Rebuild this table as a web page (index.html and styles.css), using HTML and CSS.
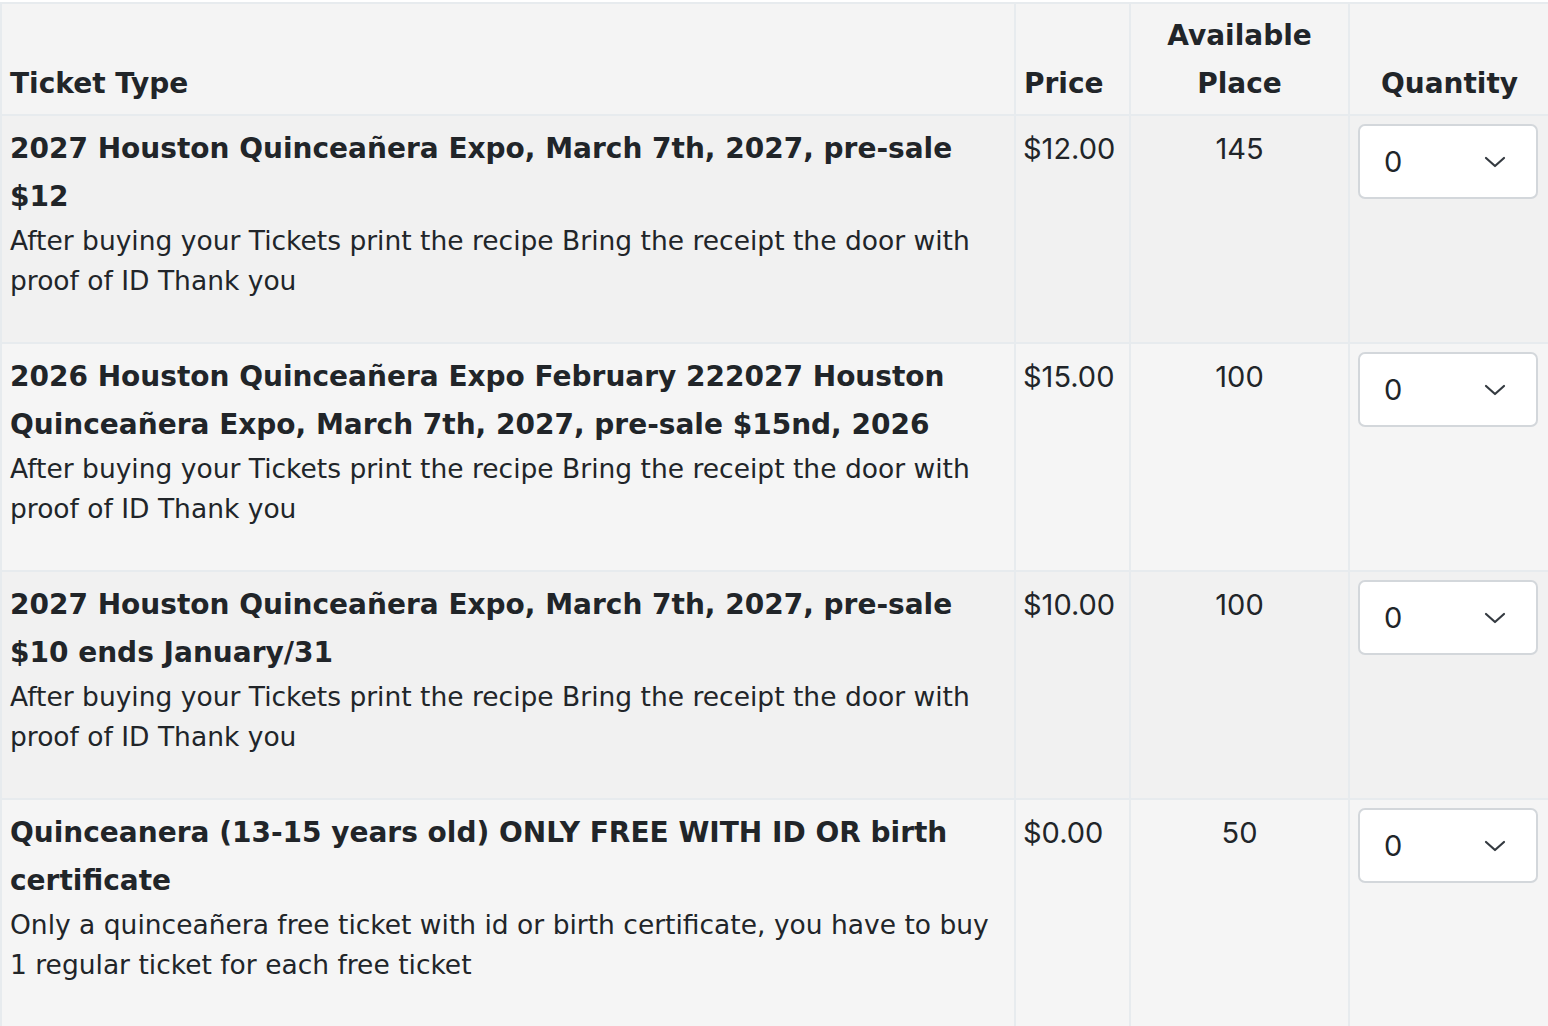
FILE: index.html
```html
<!DOCTYPE html>
<html lang="en">
<head>
<meta charset="utf-8">
<title>Tickets</title>
<link rel="stylesheet" href="styles.css">
</head>
<body>
<table class="tickets">
  <thead>
    <tr>
      <th class="col-type">Ticket Type</th>
      <th class="col-price">Price</th>
      <th class="col-avail">Available Place</th>
      <th class="col-qty">Quantity</th>
    </tr>
  </thead>
  <tbody>
    <tr class="odd">
      <td class="type"><div class="title">2027 Houston Quinceañera Expo, March 7th, 2027, pre-sale $12</div><p class="desc">After buying your Tickets print the recipe Bring the receipt the door with proof of ID Thank you</p></td>
      <td class="price">$12.00</td>
      <td class="avail">145</td>
      <td class="qty"><div class="select"><span>0</span><svg width="22" height="12" viewBox="0 0 22 12"><path d="M2 2 L11 10 L20 2" fill="none" stroke="#343a40" stroke-width="2.2" stroke-linecap="round" stroke-linejoin="round"/></svg></div></td>
    </tr>
    <tr class="even">
      <td class="type"><div class="title">2026 Houston Quinceañera Expo February 222027 Houston Quinceañera Expo, March 7th, 2027, pre-sale $15nd, 2026</div><p class="desc">After buying your Tickets print the recipe Bring the receipt the door with proof of ID Thank you</p></td>
      <td class="price">$15.00</td>
      <td class="avail">100</td>
      <td class="qty"><div class="select"><span>0</span><svg width="22" height="12" viewBox="0 0 22 12"><path d="M2 2 L11 10 L20 2" fill="none" stroke="#343a40" stroke-width="2.2" stroke-linecap="round" stroke-linejoin="round"/></svg></div></td>
    </tr>
    <tr class="odd">
      <td class="type"><div class="title">2027 Houston Quinceañera Expo, March 7th, 2027, pre-sale $10 ends January/31</div><p class="desc">After buying your Tickets print the recipe Bring the receipt the door with proof of ID Thank you</p></td>
      <td class="price">$10.00</td>
      <td class="avail">100</td>
      <td class="qty"><div class="select"><span>0</span><svg width="22" height="12" viewBox="0 0 22 12"><path d="M2 2 L11 10 L20 2" fill="none" stroke="#343a40" stroke-width="2.2" stroke-linecap="round" stroke-linejoin="round"/></svg></div></td>
    </tr>
    <tr class="even">
      <td class="type"><div class="title">Quinceanera (13-15 years old) ONLY FREE WITH ID OR birth certificate</div><p class="desc">Only a quinceañera free ticket with id or birth certificate, you have to buy 1 regular ticket for each free ticket</p></td>
      <td class="price">$0.00</td>
      <td class="avail">50</td>
      <td class="qty"><div class="select"><span>0</span><svg width="22" height="12" viewBox="0 0 22 12"><path d="M2 2 L11 10 L20 2" fill="none" stroke="#343a40" stroke-width="2.2" stroke-linecap="round" stroke-linejoin="round"/></svg></div></td>
    </tr>
  </tbody>
</table>
</body>
</html>
```
FILE: styles.css
```css
html, body {
  margin: 0;
  padding: 0;
  background: #ffffff;
}
body {
  font-family: "DejaVu Sans", "Open Sans", sans-serif;
  color: #212529;
}
.tickets {
  width: 1548px;
  margin-top: 2px;
  border-collapse: collapse;
  table-layout: fixed;
}
.tickets th,
.tickets td {
  border: 2px solid #e7ebee;
  padding: 9px 8px 8px 8px;
  text-align: left;
}
.tickets th {
  background: #f4f4f4;
  font-size: 28px;
  font-weight: 700;
  line-height: 48px;
  vertical-align: bottom;
  padding-top: 8px;
  padding-bottom: 6px;
}
.col-type { width: 996px; }
.col-price { width: 97px; }
.col-avail { width: 201px; }
.col-qty { width: 183px; }
.tickets th.col-avail, .tickets th.col-qty { text-align: center; }
.tickets td { vertical-align: top; }
tr.odd td { background: #f1f1f1; }
tr.even td { background: #f5f5f5; }
.title {
  font-size: 28px;
  font-weight: 700;
  line-height: 48px;
}
.desc {
  margin: 0 0 33px;
  font-size: 26.5px;
  line-height: 40px;
}
.price, .avail {
  font-family: Inter, "Liberation Sans", sans-serif;
  font-size: 29px;
  line-height: 48px;
}
.tickets td.price { padding-left: 7px; }
.tickets td.avail { text-align: center; }
.tickets td.qty { padding-top: 8px; }
.select {
  box-sizing: border-box;
  width: 180px;
  height: 75px;
  background: #fff;
  border: 2px solid #d3d7db;
  border-radius: 7px;
  display: flex;
  align-items: center;
  justify-content: space-between;
  padding: 0 30px 0 24px;
  font-family: Inter, "Liberation Sans", sans-serif;
  font-size: 29px;
}
.select span { line-height: 1; }
```
